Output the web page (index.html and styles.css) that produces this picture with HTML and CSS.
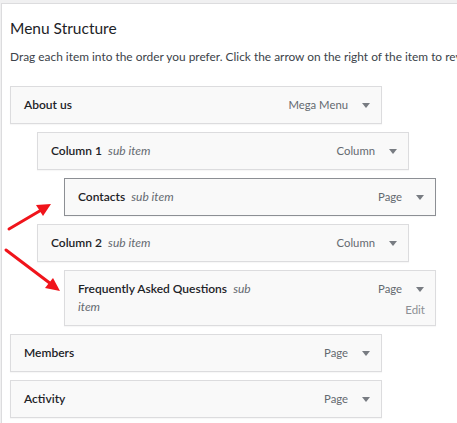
FILE: index.html
```html
<!DOCTYPE html>
<html>
<head>
<meta charset="utf-8">
<link rel="stylesheet" href="styles.css">
</head>
<body>
<div class="panel">
  <h3 class="heading">Menu Structure</h3>
  <p class="desc">Drag each item into the order you prefer. Click the arrow on the right of the item to reveal additional configuration options.</p>
  <ul class="menu">
    <li class="item depth-0">
      <div class="handle">
        <span class="title"><span class="name">About us</span></span>
        <span class="controls"><span class="ctl-row"><span class="type">Mega Menu</span><span class="arrow"></span></span></span>
      </div>
    </li>
    <li class="item depth-1">
      <div class="handle">
        <span class="title"><span class="name">Column 1</span> <span class="sub">sub item</span></span>
        <span class="controls"><span class="ctl-row"><span class="type">Column</span><span class="arrow"></span></span></span>
      </div>
    </li>
    <li class="item depth-2">
      <div class="handle active">
        <span class="title"><span class="name">Contacts</span> <span class="sub">sub item</span></span>
        <span class="controls"><span class="ctl-row"><span class="type">Page</span><span class="arrow"></span></span></span>
      </div>
    </li>
    <li class="item depth-1">
      <div class="handle">
        <span class="title"><span class="name">Column 2</span> <span class="sub">sub item</span></span>
        <span class="controls"><span class="ctl-row"><span class="type">Column</span><span class="arrow"></span></span></span>
      </div>
    </li>
    <li class="item depth-2">
      <div class="handle">
        <span class="title wrap"><span class="name">Frequently Asked Questions</span> <span class="sub">sub item</span></span>
        <span class="controls"><span class="ctl-row"><span class="type">Page</span><span class="arrow"></span></span><span class="edit">Edit</span></span>
      </div>
    </li>
    <li class="item depth-0">
      <div class="handle">
        <span class="title"><span class="name">Members</span></span>
        <span class="controls"><span class="ctl-row"><span class="type">Page</span><span class="arrow"></span></span></span>
      </div>
    </li>
    <li class="item depth-0">
      <div class="handle">
        <span class="title"><span class="name">Activity</span></span>
        <span class="controls"><span class="ctl-row"><span class="type">Page</span><span class="arrow"></span></span></span>
      </div>
    </li>
  </ul>
  <svg class="annot" width="80" height="110" viewBox="0 0 80 110">
    <line x1="8" y1="38" x2="42" y2="18" stroke="#f0141b" stroke-width="3" stroke-linecap="round"/>
    <polygon points="50,13 35,14 42,25" fill="#f0141b"/>
    <line x1="5" y1="59" x2="50" y2="93" stroke="#f0141b" stroke-width="3" stroke-linecap="round"/>
    <polygon points="59,100 44,97 52,87" fill="#f0141b"/>
  </svg>
</div>
</body>
</html>
```

FILE: styles.css
```css
html, body {
  margin: 0;
  padding: 0;
  background: #f0f0f1;
}
body {
  font-family: Lato, "Open Sans", sans-serif;
  color: #1d2327;
  overflow: hidden;
}
.panel {
  position: relative;
  margin: 3px 0 0 1px;
  border-top: 1px solid #dcdcde;
  border-left: 1px solid #dcdcde;
  background: #fff;
  padding: 0 0 10px 8px;
  height: 420px;
  box-sizing: border-box;
  overflow: hidden;
}
.heading {
  margin: 0;
  padding-top: 14px;
  font-size: 15.5px;
  font-weight: 400;
  line-height: 20px;
  color: #1d2327;
  white-space: nowrap;
}
.desc {
  margin: 10px 0 0 0;
  font-size: 11.9px;
  line-height: 18px;
  color: #3c434a;
  white-space: nowrap;
}
.menu {
  list-style: none;
  margin: 20px 0 0 0;
  padding: 0;
}
.item {
  margin: 0 0 8px 0;
  width: 372px;
}
.depth-1 { margin-left: 27px; }
.depth-2 { margin-left: 54px; }
.handle {
  display: flex;
  align-items: flex-start;
  border: 1px solid #dcdcde;
  background: #f9f9f9;
  padding: 9px 11px 9px 13px;
  box-shadow: 0 1px 1px rgba(0,0,0,0.03);
  font-size: 12px;
  line-height: 18px;
}
.handle.active {
  border-color: #8c8f94;
}
.title {
  flex: 1;
  min-width: 0;
}
.title.wrap {
  flex: 0 0 185px;
  margin-right: auto;
}
.name {
  font-weight: 600;
  color: #1d2327;
}
.sub {
  font-style: italic;
  color: #646970;
  margin-left: 3px;
}
.controls {
  display: flex;
  flex-direction: column;
  align-items: flex-end;
}
.ctl-row {
  display: flex;
  align-items: center;
  height: 18px;
}
.type {
  color: #646970;
  font-size: 11.3px;
}
.arrow {
  width: 0;
  height: 0;
  border-left: 4px solid transparent;
  border-right: 4px solid transparent;
  border-top: 5px solid #787c82;
  margin-left: 14px;
}
.edit {
  margin-top: 5px;
  margin-right: -1px;
  font-size: 11.5px;
  line-height: 13px;
  color: #8c8f94;
}
.annot {
  position: absolute;
  left: -1px;
  top: 187px;
}
```
